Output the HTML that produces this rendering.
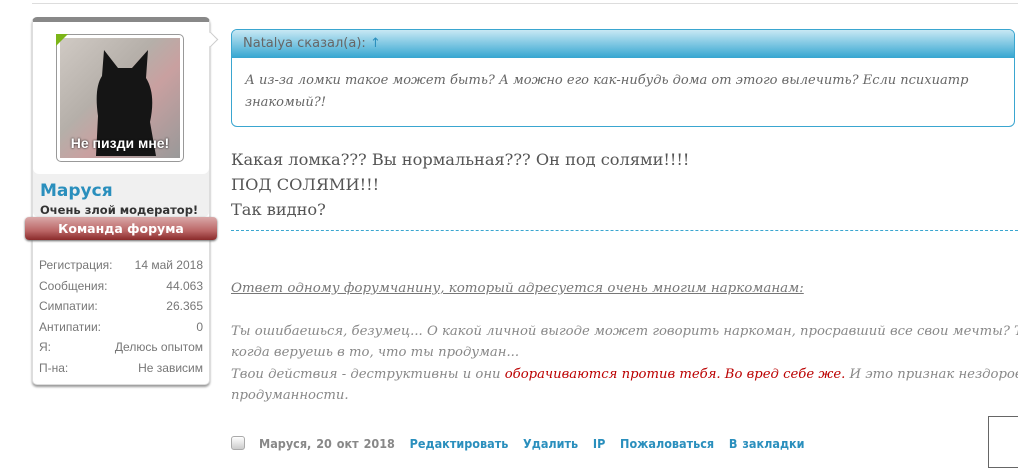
<!DOCTYPE html>
<html><head><meta charset="utf-8"><style>
body{margin:0;width:1018px;height:461px;overflow:hidden;background:#fff;position:relative;font-family:"Liberation Sans",sans-serif}
.a{position:absolute}
.serif{font-family:"DejaVu Serif","Liberation Serif",serif}
</style></head><body>
<div class="a" style="left:32px;top:3px;width:986px;height:1px;background:#ddd"></div>
<div class="a" style="left:32px;top:17px;width:178px;height:368px;border-radius:5px;background:#fff;border:1px solid #ddd;border-top:5px solid #888;box-sizing:border-box;box-shadow:0 2px 2px #999"></div>
<div class="a" style="left:33px;top:22px;width:176px;height:195px;background:#f0f0f0;border-radius:0 0 5px 5px"></div>
<div class="a" style="left:33px;top:22px;width:176px;height:152px;background:#fff;border-radius:0 0 6px 6px"></div>
<div class="a" style="top:34px;width:10px;height:10px;background:#fff;border-right:1px solid #ccc;border-top:1px solid #ccc;transform:rotate(45deg);left:205px"></div>
<div class="a" style="left:56px;top:34px;width:126px;height:126px;border:1px solid #999;border-radius:5px;background:#fff"></div>
<div class="a" style="left:60px;top:38px;width:120px;height:120px;background:linear-gradient(135deg,#d0cac4,#b5afa9 40%,#c9a0a0 60%,#999)"></div>
<div class="a" style="left:56px;top:34px;width:0;height:0;border-top:12px solid #7cb518;border-right:12px solid transparent"></div>
<svg class="a" style="left:60px;top:38px" width="120" height="120"><path d="M36 118 L38 78 Q34 50 42 38 L44 12 L58 30 L72 30 L88 12 L86 40 Q96 56 90 84 L96 118Z" fill="#151515"/></svg>
<div class="a" style="left:58px;top:135px;width:124px;text-align:center;color:#fff;font-weight:bold;font-size:14px;text-shadow:0 0 2px #000">Не пизди мне!</div>
<div class="a" style="left:40px;top:181px;color:#2a8fbd;font-weight:bold;font-size:17px;font-family:'DejaVu Sans',sans-serif">Маруся</div>
<div class="a" style="left:40px;top:203px;color:#333;font-weight:bold;font-size:11.5px;font-family:'DejaVu Sans',sans-serif">Очень злой модератор!</div>
<div class="a" style="left:25px;top:217px;width:192px;height:23px;border-radius:4px;background:linear-gradient(#d9a9a9,#b66 60%,#8a2a2a);box-shadow:0 1px 2px #666;color:#fff;font-weight:bold;font-size:12.5px;text-align:center;line-height:23px;font-family:'DejaVu Sans',sans-serif">Команда форума</div>
<div class="a" style="left:39px;top:255px;width:164px;font-size:12px;color:#777;line-height:20.6px">
<div style="display:flex;justify-content:space-between"><span>Регистрация:</span><span>14 май 2018</span></div>
<div style="display:flex;justify-content:space-between"><span>Сообщения:</span><span>44.063</span></div>
<div style="display:flex;justify-content:space-between"><span>Симпатии:</span><span>26.365</span></div>
<div style="display:flex;justify-content:space-between"><span>Антипатии:</span><span>0</span></div>
<div style="display:flex;justify-content:space-between"><span>Я:</span><span>Делюсь опытом</span></div>
<div style="display:flex;justify-content:space-between"><span>П-на:</span><span>Не зависим</span></div>
</div>
<div class="a" style="left:231px;top:29px;width:784px;height:98px;border:1px solid #3aa6d0;border-radius:6px;box-sizing:border-box;overflow:hidden">
<div style="height:27px;background:linear-gradient(#c8e8f4,#3aa8d2);border-bottom:1px solid #3aa6d0;color:#666;font-size:13px;line-height:27px;padding-left:11px;font-family:'DejaVu Sans',sans-serif">Natalya сказал(а): <span style="color:#2a8fbd">↑</span></div>
<div class="serif" style="font-style:italic;color:#666;font-size:13px;line-height:22px;padding:12px 20px 0 13px">А из-за ломки такое может быть? А можно его как-нибудь дома от этого вылечить? Если психиатр знакомый?!</div>
</div>
<div class="a serif" style="left:231px;top:147px;color:#555;font-size:16.2px;line-height:25px">Какая ломка??? Вы нормальная??? Он под солями!!!!<br>ПОД СОЛЯМИ!!!<br>Так видно?</div>
<div class="a" style="left:231px;top:230px;width:787px;border-top:1px dashed #3aa6d0"></div>
<div class="a serif" style="left:231px;top:281px;font-style:italic;color:#777;font-size:13.4px;text-decoration:underline">Ответ одному форумчанину, который адресуется очень многим наркоманам:</div>
<div class="a serif" style="left:231px;top:321px;width:787px;white-space:nowrap;overflow:hidden;font-style:italic;color:#888;font-size:13.2px;line-height:21.3px">Ты ошибаешься, безумец... О какой личной выгоде может говорить наркоман, просравший все свои мечты? Т<br>когда веруешь в то, что ты продуман...<br>Твои действия - деструктивны и они <span style="color:#b00">оборачиваются против тебя. Во вред себе же.</span> И это признак нездорово<br>продуманности.</div>
<div class="a" style="left:231px;top:436px;width:12px;height:12px;border:1px solid #aaa;border-radius:3px;background:linear-gradient(#fff,#ccc)"></div>
<div class="a" style="left:259px;top:436px;font-size:12.5px;font-weight:bold;font-family:'DejaVu Sans Condensed','DejaVu Sans',sans-serif;white-space:pre;word-spacing:1px"><span style="color:#888">Маруся, 20 окт 2018</span>   <span style="color:#2a8fbd">Редактировать   Удалить   IP   Пожаловаться   В закладки</span></div>
<div class="a" style="left:988px;top:416px;width:40px;height:50px;border:1px solid #666;background:#fff"></div>
</body></html>
